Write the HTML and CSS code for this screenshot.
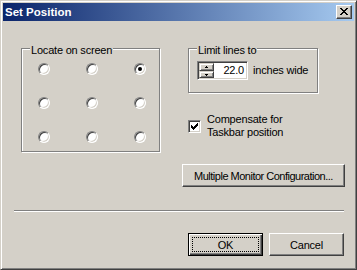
FILE: index.html
```html
<!DOCTYPE html>
<html>
<head>
<meta charset="utf-8">
<link rel="stylesheet" href="styles.css">
</head>
<body>
<div class="window">
  <div class="titlebar">
    <span class="title">Set Position</span>
    <button class="close" aria-label="Close">
      <svg width="8" height="7" viewBox="0 0 8 7" shape-rendering="crispEdges"><path d="M0 0h2v1h-2zM6 0h2v1h-2zM1 1h2v1h-2zM5 1h2v1h-2zM2 2h4v1h-4zM3 3h2v1h-2zM2 4h4v1h-4zM1 5h2v1h-2zM5 5h2v1h-2zM0 6h2v1h-2zM6 6h2v1h-2z" fill="#000"/></svg>
    </button>
  </div>
  <div class="client">
    <div class="top">
      <div class="group locate">
        <span class="group-label">Locate on screen</span>
        <div class="radio-grid">
          <span class="radio"></span>
          <span class="radio"></span>
          <span class="radio checked"></span>
          <span class="radio"></span>
          <span class="radio"></span>
          <span class="radio"></span>
          <span class="radio"></span>
          <span class="radio"></span>
          <span class="radio"></span>
        </div>
      </div>
      <div class="right-col">
        <div class="group limit">
          <span class="group-label">Limit lines to</span>
          <div class="limit-row">
            <div class="spinner">
              <div class="spin-btns">
                <span class="spin up"><svg width="3" height="2" viewBox="0 0 3 2" shape-rendering="crispEdges"><path d="M1 0h1v1h-1zM0 1h3v1h-3z" fill="#000"/></svg></span>
                <span class="spin down"><svg width="3" height="2" viewBox="0 0 3 2" shape-rendering="crispEdges"><path d="M0 0h3v1h-3zM1 1h1v1h-1z" fill="#000"/></svg></span>
              </div>
              <span class="spin-value">22.0</span>
            </div>
            <span class="unit">inches wide</span>
          </div>
        </div>
        <div class="check-row">
          <span class="checkbox"><svg width="7" height="7" viewBox="0 0 7 7" shape-rendering="crispEdges"><path d="M6 0h1v1h-1zM5 1h2v1h-2zM0 2h1v1h-1zM4 2h3v1h-3zM0 3h2v1h-2zM3 3h3v1h-3zM0 4h5v1h-5zM1 5h3v1h-3zM2 6h1v1h-1z" fill="#000"/></svg></span>
          <span class="check-label">Compensate for<br>Taskbar position</span>
        </div>
        <button class="btn mmc">Multiple Monitor Configuration...</button>
      </div>
    </div>
    <div class="separator"></div>
    <div class="actions">
      <button class="btn default">OK</button>
      <button class="btn">Cancel</button>
    </div>
  </div>
</div>
</body>
</html>
```

FILE: styles.css
```css
html, body {
  margin: 0;
  padding: 0;
  background: #d4d0c8;
}
body {
  font-family: "Liberation Sans", Arial, sans-serif;
  font-size: 11px;
  letter-spacing: -0.2px;
  color: #000;
}
.window {
  width: 357px;
  height: 270px;
  box-sizing: border-box;
  background: #d4d0c8;
  border: 1px solid;
  border-color: #d4d0c8 #404040 #404040 #d4d0c8;
  box-shadow: inset 1px 1px 0 #fff, inset -1px -1px 0 #808080;
  padding: 2px;
  display: flex;
  flex-direction: column;
}
.titlebar {
  height: 18px;
  flex: none;
  background: linear-gradient(to right, #0a246a, #a6caf0);
  display: flex;
  align-items: center;
  justify-content: space-between;
  padding: 0 2px 0 2px;
}
.title {
  color: #fff;
  font-weight: bold;
  font-size: 11.5px;
  letter-spacing: 0;
  line-height: 18px;
}
.close {
  width: 16px;
  height: 14px;
  box-sizing: border-box;
  padding: 0;
  margin: 0;
  background: #d4d0c8;
  border: 1px solid;
  border-color: #fff #404040 #404040 #fff;
  box-shadow: inset -1px -1px 0 #808080;
  display: flex;
  align-items: center;
  justify-content: center;
}
.close svg {
  display: block;
  margin: 0 1px 1px 0;
}
.client {
  flex: 1;
  padding: 27px 9px 0 11px;
  display: flex;
  flex-direction: column;
}
.top {
  display: flex;
  align-items: flex-start;
}
.group {
  position: relative;
  box-sizing: border-box;
  border: 1px solid #808080;
  box-shadow: inset 1px 1px 0 #fff, 1px 1px 0 #fff;
}
.group-label {
  position: absolute;
  top: -5px;
  left: 8px;
  padding: 0 1px;
  line-height: 13px;
  background: #d4d0c8;
  white-space: nowrap;
}
.locate {
  margin-left: 7px;
  width: 139px;
  height: 104px;
  padding: 14px 0 0 16px;
}
.radio-grid {
  display: grid;
  grid-template-columns: repeat(3, 12px);
  grid-auto-rows: 12px;
  column-gap: 36px;
  row-gap: 22px;
}
.radio {
  width: 12px;
  height: 12px;
  box-sizing: border-box;
  border-radius: 50%;
  border: 1px solid;
  border-color: #808080 #fff #fff #808080;
  box-shadow: inset 1px 1px 0 #404040, inset -1px -1px 0 #d4d0c8;
  background: #fff;
  display: flex;
  align-items: center;
  justify-content: center;
}
.radio.checked::after {
  content: "";
  width: 4px;
  height: 4px;
  border-radius: 50%;
  background: #000;
}
.right-col {
  margin-left: 22px;
  flex: 1;
  display: flex;
  flex-direction: column;
  align-items: flex-start;
}
.limit {
  margin-left: 6px;
  width: 130px;
  height: 45px;
  padding: 12px 0 0 8px;
}
.limit-row {
  display: flex;
  align-items: center;
  gap: 5px;
}
.spinner {
  width: 51px;
  height: 19px;
  box-sizing: border-box;
  border: 1px solid;
  border-color: #808080 #fff #fff #808080;
  box-shadow: inset 1px 1px 0 #404040, inset -1px -1px 0 #d4d0c8;
  background: #fff;
  padding: 1px;
  display: flex;
}
.spin-btns {
  display: flex;
  flex-direction: column;
  width: 15px;
}
.spin {
  box-sizing: border-box;
  background: #d4d0c8;
  border: 1px solid;
  border-color: #d4d0c8 #404040 #404040 #d4d0c8;
  box-shadow: inset 1px 1px 0 #fff, inset -1px -1px 0 #808080;
  display: flex;
  align-items: center;
  justify-content: center;
}
.spin.up { height: 8px; }
.spin.down { height: 7px; }
.spin svg { display: block; }
.spin-value {
  flex: 1;
  text-align: right;
  padding-right: 2px;
  line-height: 15px;
}
.unit {
  line-height: 13px;
}
.check-row {
  margin-left: 6px;
  margin-top: 20px;
  display: flex;
  align-items: center;
  gap: 6px;
}
.checkbox {
  width: 13px;
  height: 13px;
  box-sizing: border-box;
  border: 1px solid;
  border-color: #808080 #fff #fff #808080;
  box-shadow: inset 1px 1px 0 #404040, inset -1px -1px 0 #d4d0c8;
  background: #fff;
  padding: 2px;
}
.checkbox svg { display: block; }
.check-label {
  line-height: 13px;
}
.btn {
  font-family: inherit;
  font-size: 11px;
  letter-spacing: -0.2px;
  color: #000;
  background: #d4d0c8;
  border: 1px solid;
  border-color: #fff #404040 #404040 #fff;
  box-shadow: inset -1px -1px 0 #808080;
  padding: 0;
  margin: 0;
  height: 23px;
  width: 75px;
  box-sizing: border-box;
}
.mmc {
  margin-top: 25px;
  width: 163px;
  letter-spacing: -0.5px;
}
.separator {
  margin-top: 23px;
  margin-right: 1px;
  height: 0;
  border-top: 1px solid #808080;
  border-bottom: 1px solid #fff;
}
.actions {
  margin-top: 21px;
  padding-right: 1px;
  display: flex;
  justify-content: flex-end;
  gap: 6px;
}
.btn.default {
  border: 1px solid #000;
  box-shadow: inset 1px 1px 0 #fff, inset -1px -1px 0 #404040, inset -2px -2px 0 #808080;
  outline: 1px dotted #000;
  outline-offset: -5px;
}
```
